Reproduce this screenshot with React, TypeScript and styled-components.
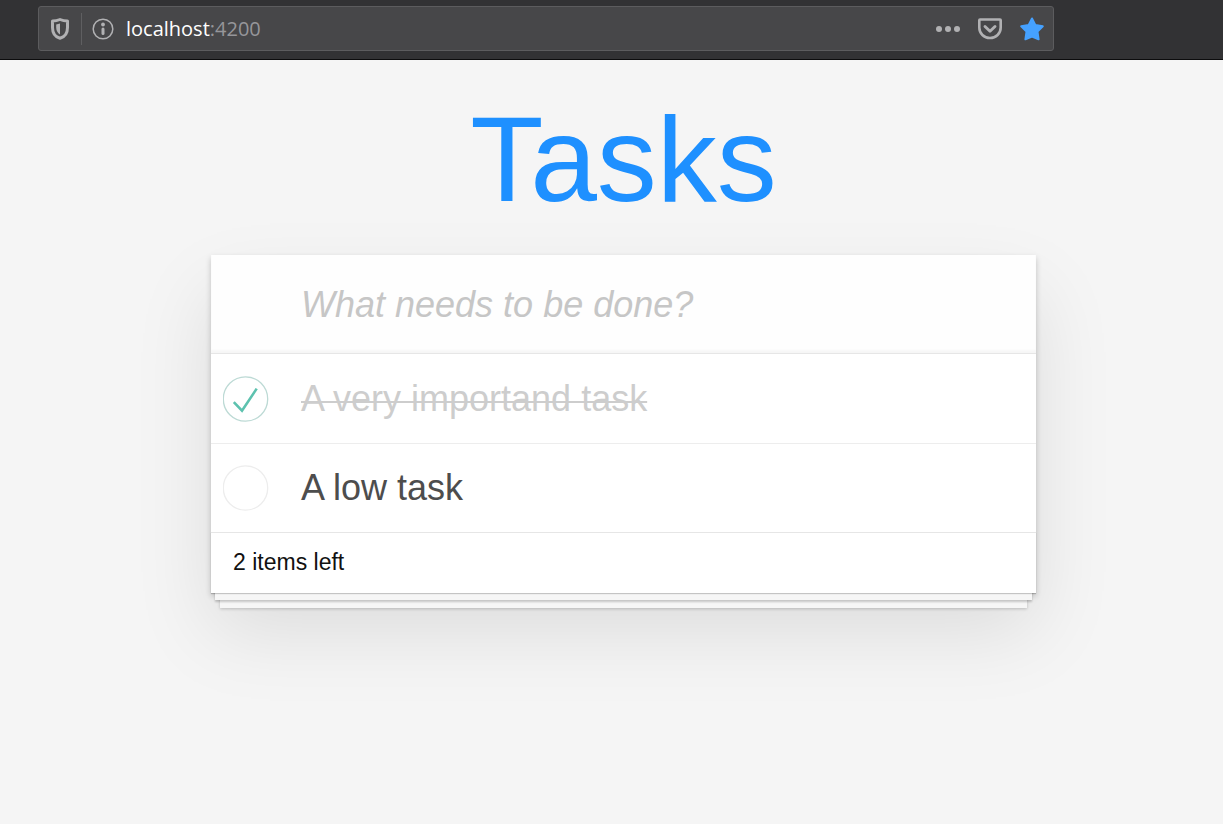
import React, { useState } from 'react';
import styled, { createGlobalStyle } from 'styled-components';

const GlobalStyle = createGlobalStyle`
  *, *::before, *::after { box-sizing: border-box; }
  body {
    margin: 0;
    min-height: 100vh;
    background: #f5f5f5;
    color: #111111;
    font-family: "Liberation Sans", Arial, sans-serif;
  }
`;

const Toolbar = styled.header`
  display: flex;
  height: 60px;
  padding: 6px 169px 8px 38px;
  background: #323234;
  border-bottom: 1px solid #0c0c0d;
`;

const AddressBar = styled.div`
  flex: 1;
  display: flex;
  align-items: center;
  padding: 0 8px 0 10px;
  background: #474749;
  border: 1px solid #5c5c5e;
  border-radius: 3px;
`;

const IconButton = styled.button<{ $color?: string }>`
  display: flex;
  flex: none;
  padding: 0;
  border: 0;
  background: none;
  color: ${({ $color }) => $color ?? '#b1b1b3'};
`;

const Divider = styled.span`
  width: 1px;
  height: 32px;
  margin: 0 10px;
  background: #5f5f61;
`;

const Address = styled.span`
  flex: 1;
  margin-left: 12px;
  padding-top: 1px;
  font: 20px/28px "Open Sans", "Noto Sans", sans-serif;
  color: #ffffff;
`;

const Port = styled.span`
  color: #96969a;
`;

const PageActions = styled.div`
  display: flex;
  gap: 16px;
`;

const Main = styled.main`
  padding: 0 0 80px 24px;
`;

const Title = styled.h1`
  margin: 0;
  padding: 30px 0 27px;
  font-size: 120px;
  font-weight: 400;
  line-height: 138px;
  text-align: center;
  color: #1e90ff;
`;

const Card = styled.section`
  max-width: 825px;
  margin: 0 auto;
  background: #ffffff;
  box-shadow: 0 3px 6px rgba(0, 0, 0, 0.2), 0 38px 75px rgba(0, 0, 0, 0.1);
`;

const NewTask = styled.input`
  display: block;
  width: 100%;
  height: 98px;
  padding: 2px 24px 0 90px;
  border: 0;
  outline: 0;
  background: #fefefe;
  box-shadow: inset 0 -3px 2px rgba(0, 0, 0, 0.03);
  font: 36px/50px "Liberation Sans", Arial, sans-serif;
  color: #4d4d4d;
  &::placeholder {
    color: #c6c6c6;
    opacity: 1;
    font-style: italic;
  }
`;

const TaskList = styled.ul`
  margin: 0;
  padding: 0;
  list-style: none;
  border-top: 1px solid #e6e6e6;
`;

const TaskRow = styled.li`
  display: flex;
  align-items: center;
  height: 88px;
  &:not(:last-child) {
    height: 90px;
    border-bottom: 1px solid #ededed;
  }
`;

const TaskLabel = styled.label<{ $done: boolean }>`
  display: flex;
  align-items: center;
  gap: 32px;
  padding-left: 12px;
  font-size: 36px;
  line-height: 44px;
  color: ${({ $done }) => ($done ? '#cdcdcd' : '#4d4d4d')};
`;

/* The strike is an underline raised into the letters, which keeps it thin and low. */
const TaskText = styled.span<{ $done: boolean }>`
  text-decoration: ${({ $done }) => ($done ? 'underline 2px' : 'none')};
  text-underline-offset: -10px;
  text-decoration-skip-ink: none;
`;

const Toggle = styled.span`
  display: grid;
  width: 46px;
  height: 46px;
  & > * { grid-area: 1 / 1; }
`;

const ToggleInput = styled.input`
  appearance: none;
  width: 46px;
  height: 46px;
  margin: 0;
  border: 0;
  border-radius: 50%;
`;

const ToggleMark = styled.svg`
  pointer-events: none;
`;

const CardFooter = styled.footer`
  height: 61px;
  padding: 14px 22px;
  border-top: 1px solid #e6e6e6;
  background: #ffffff;
  font-size: 23px;
  line-height: 30px;
  box-shadow:
    0 1px 1px rgba(0, 0, 0, 0.2),
    0 11px 0 -4px #f6f6f6,
    0 13px 2px -4px rgba(0, 0, 0, 0.2),
    0 24px 0 -9px #f6f6f6,
    0 25px 3px -9px rgba(0, 0, 0, 0.2);
`;

const ShieldIcon = () => (
  <svg width="22" height="24" viewBox="0 0 22 24" fill="none" stroke="currentColor" aria-hidden="true">
    <path d="M11 2.5C8.300 3.700 5.700 4.100 3.500 4.100V10.500C3.500 16 6.500 20 11 21.300C15.500 20 18.500 16 18.500 10.500V4.100C16.300 4.100 13.700 3.700 11 2.500Z" strokeWidth="3" strokeLinejoin="round" />
    <path d="M11 6.500V17.500C8.500 16 7.200 13.500 7.200 10.500V7.500Z" fill="currentColor" stroke="none" />
  </svg>
);

const InfoIcon = () => (
  <svg width="22" height="22" viewBox="0 0 22 22" fill="none" aria-hidden="true">
    <circle cx="11" cy="11" r="9.800" stroke="currentColor" strokeWidth="1.500" />
    <circle cx="11" cy="6.500" r="1.900" fill="currentColor" />
    <path d="M11 11V15.500" stroke="currentColor" strokeWidth="3" strokeLinecap="round" />
  </svg>
);

const DotsIcon = () => (
  <svg width="26" height="26" viewBox="0 0 26 26" fill="currentColor" aria-hidden="true">
    <circle cx="4" cy="13" r="3" />
    <circle cx="13" cy="13" r="3" />
    <circle cx="22" cy="13" r="3" />
  </svg>
);

const PocketIcon = () => (
  <svg width="26" height="26" viewBox="0 0 26 26" fill="none" stroke="currentColor" strokeLinecap="round" strokeLinejoin="round" aria-hidden="true">
    <path d="M3 3.500H23C23.400 3.500 23.700 3.800 23.700 4.200V11.500C23.700 17.500 19 22 13 22S2.300 17.500 2.300 11.500V4.200C2.300 3.800 2.600 3.500 3 3.500Z" strokeWidth="2.600" />
    <path d="M8 10.500L13 15.300L18 10.500" strokeWidth="2.900" />
  </svg>
);

const StarIcon = () => (
  <svg width="26" height="26" viewBox="0 0 26 26" fill="currentColor" stroke="currentColor" strokeWidth="2" strokeLinejoin="round" aria-hidden="true">
    <path d="M13 2.500L16.300 9L23.800 10.300L18.500 15.600L19.600 23.300L13 20.500L6.400 23.300L7.500 15.600L2.200 10.300L9.700 9Z" />
  </svg>
);

type Task = { id: number; text: string; done: boolean };

const initialTasks: Task[] = [
  { id: 1, text: 'A very importand task', done: true },
  { id: 2, text: 'A low task', done: false },
];

export default function App() {
  const [tasks, setTasks] = useState(initialTasks);
  const [draft, setDraft] = useState('');

  const toggle = (id: number) =>
    setTasks(list => list.map(t => (t.id === id ? { ...t, done: !t.done } : t)));

  const addTask = (event: React.KeyboardEvent) => {
    if (event.key !== 'Enter' || !draft.trim()) return;
    setTasks(list => [...list, { id: list.length + 1, text: draft.trim(), done: false }]);
    setDraft('');
  };

  return (
    <>
      <GlobalStyle />
      <Toolbar>
        <AddressBar>
          <IconButton aria-label="Tracking protection"><ShieldIcon /></IconButton>
          <Divider />
          <IconButton aria-label="Site information"><InfoIcon /></IconButton>
          <Address>localhost<Port>:4200</Port></Address>
          <PageActions>
            <IconButton aria-label="Page actions"><DotsIcon /></IconButton>
            <IconButton aria-label="Save to Pocket"><PocketIcon /></IconButton>
            <IconButton aria-label="Edit bookmark" $color="#45a1ff"><StarIcon /></IconButton>
          </PageActions>
        </AddressBar>
      </Toolbar>
      <Main>
        <Title>Tasks</Title>
        <Card>
          <NewTask
            aria-label="New task"
            placeholder="What needs to be done?"
            value={draft}
            onChange={e => setDraft(e.target.value)}
            onKeyDown={addTask}
          />
          <TaskList>
            {tasks.map(task => (
              <TaskRow key={task.id}>
                <TaskLabel $done={task.done}>
                  <Toggle>
                    <ToggleInput type="checkbox" checked={task.done} onChange={() => toggle(task.id)} />
                    <ToggleMark width="46" height="46" viewBox="0 0 46 46" fill="none" aria-hidden="true">
                      <circle cx="22.500" cy="23" r="22.200" stroke={task.done ? '#bddad5' : '#ededed'} strokeWidth="1.300" />
                      {task.done && <path d="M10.800 26.200L19 34.600L33.700 12.600" stroke="#5dc2af" strokeWidth="2.600" />}
                    </ToggleMark>
                  </Toggle>
                  <TaskText $done={task.done}>{task.text}</TaskText>
                </TaskLabel>
              </TaskRow>
            ))}
          </TaskList>
          <CardFooter>{tasks.length} items left</CardFooter>
        </Card>
      </Main>
    </>
  );
}
